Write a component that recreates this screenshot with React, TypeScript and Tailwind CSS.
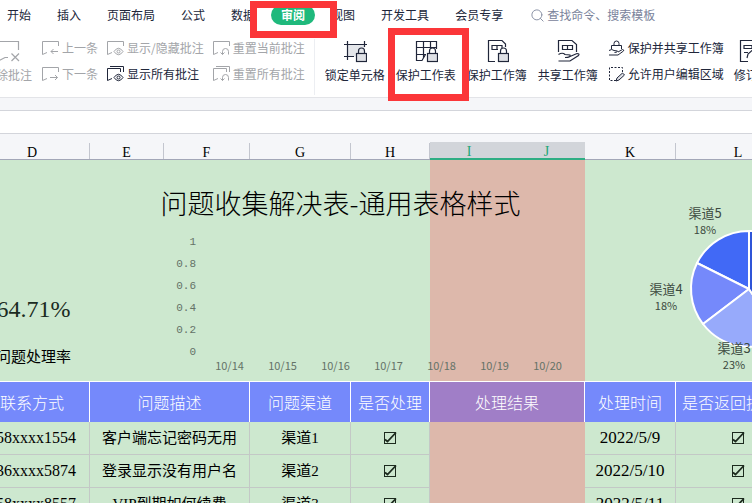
import { ReactNode } from 'react'
import { Search } from 'lucide-react'

const tabs = ['开始', '插入', '页面布局', '公式', '数据', '审阅', '视图', '开发工具', '会员专享']
const activeTab = '审阅'

const columns = [
  { name: 'D', width: 'w-[115px]' },
  { name: 'E', width: 'w-[74px]' },
  { name: 'F', width: 'w-[86px]' },
  { name: 'G', width: 'w-[101px]' },
  { name: 'H', width: 'w-[79px]' },
  { name: 'I', width: 'w-[78px]', selected: true },
  { name: 'J', width: 'w-[77px]', selected: true },
  { name: 'K', width: 'w-[91px]' },
  { name: 'L', width: 'w-[125px]' },
]

const rows = [
  { phone: '158xxxx1554', issue: '客户端忘记密码无用', channel: '渠道1', date: '2022/5/9' },
  { phone: '136xxxx5874', issue: '登录显示没有用户名', channel: '渠道2', date: '2022/5/10' },
  { phone: '158xxxx8557', issue: 'VIP到期如何续费', channel: '渠道3', date: '2022/5/11' },
]

const yTicks = ['1', '0.8', '0.6', '0.4', '0.2', '0']
const xTicks = ['10/14', '10/15', '10/16', '10/17', '10/18', '10/19', '10/20']

const slices = [
  { d: 'M104 89V31A58 58 0 0 0 52 63Z', fill: '#4169f6' },
  { d: 'M104 89L52 63A58 58 0 0 0 58 124Z', fill: '#7589fb' },
  { d: 'M104 89L58 124A58 58 0 0 0 136 137Z', fill: '#97aafb' },
  { d: 'M104 89L136 137A58 58 0 0 0 104 31Z', fill: '#2f55d8' },
]

const pieLabels = [
  { name: '渠道5', value: '18%', x: 60, y: 18 },
  { name: '渠道4', value: '18%', x: 21, y: 94 },
  { name: '渠道3', value: '23%', x: 89, y: 153 },
]

function CommentIcon({ stacked, children }: { stacked?: boolean; children: ReactNode }) {
  return (
    <svg width="17" height="16" viewBox="0 0 17 16" fill="none" stroke="currentColor" className="shrink-0">
      {stacked ? (
        <path d="M3 .5H16.5V6M13.5 6V2.5H.5V14.5L5 12.5" />
      ) : (
        <path d="M16.5 6V1.5H.5V14.5L5 12.5" />
      )}
      {children}
    </svg>
  )
}

const eye = (
  <>
    <path d="M7 11.5Q11.5 5 16 11.5Q11.5 18 7 11.5Z" />
    <circle cx="11.5" cy="11.5" r="1.5" />
  </>
)
const undo = <path d="M9.5 14.5V11.5A3 3 0 0 1 15.5 11.5V14.5M7.5 12.5L9.5 14.5L11.5 12.5" />

function BigIcon({ children }: { children: ReactNode }) {
  return (
    <svg width="24" height="24" viewBox="0 0 24 24" fill="none" stroke="currentColor" strokeWidth="1.2">
      {children}
    </svg>
  )
}

const lock = (
  <>
    <path d="M15.5 14.5V12A3 3 0 0 1 21.5 12V14.5" />
    <rect x="13.5" y="14.5" width="10" height="8" fill="#dfe1e6" />
  </>
)

function SmallButton({ icon, label, muted }: { icon: ReactNode; label: string; muted?: boolean }) {
  return (
    <button
      disabled={muted}
      className={`flex h-4 items-center gap-[3px] text-xs leading-4 whitespace-nowrap ${muted ? 'text-[#a3a5a9]' : 'text-[#20263a]'}`}
    >
      {icon}
      {label}
    </button>
  )
}

function BigButton({ icon, label, muted }: { icon: ReactNode; label: string; muted?: boolean }) {
  return (
    <button
      disabled={muted}
      className={`flex shrink-0 flex-col items-center gap-1 text-xs leading-4 whitespace-nowrap ${muted ? 'text-[#a3a5a9]' : 'text-[#20263a]'}`}
    >
      {icon}
      {label}
    </button>
  )
}

function Tick({ label }: { label: string }) {
  return (
    <span className="relative mx-auto block size-3">
      <input
        type="checkbox"
        defaultChecked
        aria-label={label}
        className="block size-3 appearance-none border border-[#1c2a1e]"
      />
      <svg viewBox="0 0 12 12" className="pointer-events-none absolute inset-0 size-3 overflow-visible" fill="none" stroke="#1c2a1e" strokeWidth="1.8">
        <path d="M1 7.5L3.5 9.5L12 .5" />
      </svg>
    </span>
  )
}

function TabBar() {
  return (
    <nav className="flex h-[30px] items-center gap-[26px] pl-[7px] text-xs text-[#20263a]">
      {tabs.map((tab) => (
        <button
          key={tab}
          className={`shrink-0 leading-5 ${tab === activeTab ? '-mx-[10px] rounded-full bg-[#1fb97c] px-[10px] font-bold text-white' : ''}`}
        >
          {tab}
        </button>
      ))}
      <label className="ml-px flex items-center gap-0.5">
        <Search size={15} strokeWidth={1.6} className="shrink-0 text-[#8b93a7]" />
        <input
          type="search"
          aria-label="搜索"
          placeholder="查找命令、搜索模板"
          className="w-32 bg-transparent outline-none placeholder:text-[#7a839b]"
        />
      </label>
    </nav>
  )
}

function Ribbon() {
  return (
    <div className="flex h-[68px] items-start border-b border-[#e3e4e8] pt-[9px]">
      <div className="-ml-4 mr-[10px]">
        <BigButton
          muted
          label="删除批注"
          icon={
            <BigIcon>
              <path d="M22.5 11V2.5H2.5V22L9 18.5H12M15.5 14.5L23 22M23 14.5L15.5 22" />
            </BigIcon>
          }
        />
      </div>
      <div className="mr-[9px] flex flex-col gap-[10px] pt-px">
        <SmallButton muted label="上一条" icon={<CommentIcon><path d="M16 11.5H9M11.5 9L9 11.5L11.5 14" /></CommentIcon>} />
        <SmallButton muted label="下一条" icon={<CommentIcon><path d="M8 11.5H15.5M13 9L15.5 11.5L13 14" /></CommentIcon>} />
      </div>
      <div className="mr-[9px] flex w-[97px] flex-col gap-[10px] pt-px">
        <SmallButton muted label="显示/隐藏批注" icon={<CommentIcon>{eye}</CommentIcon>} />
        <SmallButton label="显示所有批注" icon={<CommentIcon stacked>{eye}</CommentIcon>} />
      </div>
      <div className="flex flex-col gap-[10px] pt-px">
        <SmallButton muted label="重置当前批注" icon={<CommentIcon>{undo}</CommentIcon>} />
        <SmallButton muted label="重置所有批注" icon={<CommentIcon stacked>{undo}</CommentIcon>} />
      </div>
      <div className="mr-[10px] ml-[9px] h-14 w-px shrink-0 bg-[#eceef2]"></div>

      <div className="flex gap-[11px]">
        <BigButton
          label="锁定单元格"
          icon={
            <BigIcon>
              <rect x="4.5" y="5.5" width="17" height="12" fill="#e4e6ea" stroke="none" />
              <path d="M4.5 2V21M21.5 2V8M1 5.5H24M1 17.5H11" />
              {lock}
            </BigIcon>
          }
        />
        <BigButton
          label="保护工作表"
          icon={
            <BigIcon>
              <path d="M22.5 10V2.5H2.5V21.5H8L11.5 15.5M9.5 2.5V19M16.5 2.5V9.5M2.5 8.5H22.5M2.5 15.5H12" />
              {lock}
            </BigIcon>
          }
        />
        <BigButton
          label="保护工作簿"
          icon={
            <BigIcon>
              <path d="M10 22.5H3.5V1.5H17L20.5 5V8M7 6.5H17V9M7 10.5H13M7 6V11M12 6.5V10.5" />
              {lock}
            </BigIcon>
          }
        />
        <BigButton
          label="共享工作簿"
          icon={
            <BigIcon>
              <path d="M2.5 13V1.5H16L20.5 5.5V13M6.5 6.5H16.5V10.5H6.5ZM11.5 6.5V10.5" />
              <path d="M2.5 15.5Q6.5 13 9 15.5L14 16Q15 18.5 9 18.5M14 17.5L21 14.5Q24 14.5 22.5 16.5L14 22H2.5" />
            </BigIcon>
          }
        />
      </div>

      <div className="mx-[10px] flex flex-col gap-[10px] pt-px">
        <SmallButton
          label="保护并共享工作簿"
          icon={
            <svg width="17" height="16" viewBox="0 0 17 16" fill="none" stroke="currentColor" className="shrink-0">
              <path d="M6 5V3.5A2.5 2.5 0 0 1 11 3.5V5M3.5 9V5.5H13.5V9" />
              <path d="M1 10.5Q4 8.5 6 10.5L9.5 11Q9.5 12.5 6.5 12.5M10 12L14.5 9.5Q16.5 10 15.5 11L10 15H1" />
            </svg>
          }
        />
        <SmallButton
          label="允许用户编辑区域"
          icon={
            <svg width="17" height="16" viewBox="0 0 17 16" fill="none" stroke="currentColor" className="shrink-0">
              <path d="M8 14.5H1.5V1.5H14.5V6" strokeDasharray="2 1.5" />
              <path d="M8 15L9 12L14.5 7L16.5 9L11 14Z" fill="#dfe1e6" />
            </svg>
          }
        />
      </div>
      <BigButton
        label="修订"
        icon={
          <BigIcon>
            <path d="M14 22.5H6.5V1.5H24M10 6.5H18V9.5H10ZM10 13.5H14" />
            <path d="M13 19L14 15L22 8" />
          </BigIcon>
        }
      />
    </div>
  )
}

function Dashboard() {
  return (
    <div className="flex h-[221px]">
      <div className="flex w-[117px] shrink-0 flex-col items-center pt-[133px] font-['Liberation_Serif','Noto_Sans_CJK_SC',serif] text-black">
        <div className="text-2xl leading-8 text-[#1b2b22]">64.71%</div>
        <div className="mt-5 text-[15px] leading-6 whitespace-nowrap">问题处理率</div>
      </div>

      <div className="w-[493px] shrink-0 pt-6">
        <h1 className="pl-1 text-center text-[27px] leading-[38px] font-light whitespace-nowrap text-black">
          问题收集解决表-通用表格样式
        </h1>
        <div className="mt-3 flex w-[104px] flex-col items-end gap-[6px] font-['Liberation_Mono',monospace] text-[11px] leading-4 text-[#647267]">
          {yTicks.map((tick) => (
            <span key={tick}>{tick}</span>
          ))}
        </div>
        <div className="-mt-[3px] flex pl-[111px] text-[11px] leading-4 text-[#647267]">
          {xTicks.map((tick) => (
            <span key={tick} className="w-[53px] shrink-0 text-center">{tick}</span>
          ))}
        </div>
      </div>

      <svg width="170" height="181" viewBox="0 0 170 181" className="mt-10 ml-[60px] shrink-0">
        {slices.map((slice) => (
          <path key={slice.fill} d={slice.d} fill={slice.fill} stroke="#fff" strokeWidth="2" strokeLinejoin="round" />
        ))}
        {pieLabels.map((label) => (
          <g key={label.name} textAnchor="middle" fill="#3c4a40">
            <text x={label.x} y={label.y} fontSize="13">{label.name}</text>
            <text x={label.x} y={label.y + 16} fontSize="11">{label.value}</text>
          </g>
        ))}
      </svg>
    </div>
  )
}

function Sheet() {
  const head = 'border-t border-r border-white p-0 text-base font-light whitespace-nowrap'
  const cell = 'border-r border-b border-[#c3c8c6] p-0 whitespace-nowrap'

  return (
    <div className="relative -ml-[25px] w-[826px]">
      {/* Column letters */}
      <div className="flex h-[26px] items-end border-b border-[#a3a7b8] bg-[#f5f6f9] font-['Liberation_Serif',serif] text-sm leading-5 text-black">
        {columns.map((column) => (
          <div
            key={column.name}
            className={`shrink-0 text-center ${column.width} ${
              column.selected
                ? '-mb-px h-[18px] border-b-2 border-[#2fae84] bg-[#d2d5da] text-[#21a675]'
                : 'h-4 border-r border-[#c3c6cf]'
            }`}
          >
            {column.name}
          </div>
        ))}
      </div>

      <div className="relative bg-[#cde8cf]">
        {/* Selected columns I:J */}
        <div className="pointer-events-none absolute inset-y-0 left-[455px] w-[155px] bg-[#ddb8ab]"></div>
        <div className="relative">
          <Dashboard />
          <table className="w-full table-fixed border-separate border-spacing-0 text-center text-black">
            <colgroup>
              {columns.map((column) => (
                <col key={column.name} className={column.width} />
              ))}
            </colgroup>
            <thead>
              <tr className="h-[41px] bg-[#7589fb] text-white">
                <th className={head}>联系方式</th>
                <th className={head} colSpan={2}>问题描述</th>
                <th className={head}>问题渠道</th>
                <th className={head}>是否处理</th>
                <th className={`${head} bg-[#a07ec7]`} colSpan={2}>处理结果</th>
                <th className={head}>处理时间</th>
                <th className={head}>是否返回提交人</th>
              </tr>
            </thead>
            <tbody className="font-['Liberation_Serif','Noto_Sans_CJK_SC',serif] text-[15px] leading-6">
              {rows.map((row) => (
                <tr key={row.phone} className="h-[33px]">
                  <td className={`${cell} text-base`}>{row.phone}</td>
                  <td className={cell} colSpan={2}>{row.issue}</td>
                  <td className={cell}>{row.channel}</td>
                  <td className={cell}><Tick label="是否处理" /></td>
                  <td className="p-0" colSpan={2}></td>
                  <td className={`${cell} text-[17px]`}>{row.date}</td>
                  <td className={cell}><Tick label="是否返回" /></td>
                </tr>
              ))}
            </tbody>
          </table>
        </div>
      </div>
    </div>
  )
}

export default function App() {
  return (
    <div className="h-screen overflow-hidden bg-[#f5f6f9] font-['Noto_Sans_CJK_SC',sans-serif]">
      <header className="relative bg-white">
        <TabBar />
        <Ribbon />
        <div className="pointer-events-none absolute top-px left-[250px] h-[37px] w-[87px] border-[7px] border-[#fb3639]"></div>
        <div className="pointer-events-none absolute top-7 left-[388px] h-[73px] w-[81px] border-[7px] border-[#fb3639]"></div>
      </header>
      <div className="mt-3 h-6 border-y border-[#d3d5db] bg-white"></div>
      <Sheet />
    </div>
  )
}
